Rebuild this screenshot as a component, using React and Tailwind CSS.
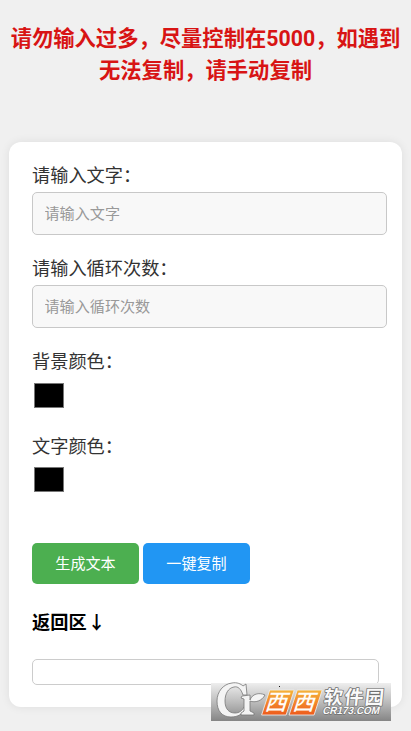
const cjk = "font-['Noto_Sans_CJK_SC',sans-serif]";

function Field({ label, placeholder }) {
  return (
    <div className="h-[93.2px]">
      <label className="block h-[27px] text-[18.2px] leading-[27px] text-[#333]">{label}</label>
      <input
        className="mt-[4px] block h-[43px] w-[355px] rounded-[5px] border border-[#c8c8c8] bg-[#f8f8f8] pl-[11.5px] pb-[4px] text-[15.1px] placeholder:text-[#999] placeholder:opacity-100"
        placeholder={placeholder}
      />
    </div>
  );
}

function ColorField({ label }) {
  return (
    <div className="h-[84.6px]">
      <div className="h-[27px] text-[18.2px] leading-[27px] text-[#333]">{label}</div>
      <div className="mt-[8.4px] ml-[2px] h-[25px] w-[30px] border border-[#777] bg-black" />
    </div>
  );
}

function Watermark() {
  return (
    <svg className="absolute left-[211px] top-[683px]" width="180" height="38" viewBox="0 0 180 38" overflow="visible">
      <defs>
        <linearGradient id="plate" x1="0" y1="0" x2="0" y2="1">
          <stop offset="0" stopColor="#eeeeee" />
          <stop offset="0.5" stopColor="#bcbcbc" />
          <stop offset="1" stopColor="#858585" />
        </linearGradient>
        <linearGradient id="orange" x1="0" y1="0" x2="0" y2="1">
          <stop offset="0" stopColor="#f6b43a" />
          <stop offset="1" stopColor="#ee5a1c" />
        </linearGradient>
      </defs>
      <rect width="180" height="38" fill="url(#plate)" />
      <g fill="#f4f4f4" stroke="#777" strokeWidth="0.8" strokeLinejoin="round">
        <path d="M35 1 L36 12 L32 12 C30 6 27 3 23 4 C17 5 14 11 14 18 C14 26 18 30 24 30 C28 30 31 28 33 24 L35 25 C32 31 27 34 20 34 C11 34 6 28 6 18 C6 9 12 1 21 0 C26 -1 30 1 32 3 Z" />
        <path d="M31 13 L39 12 L39 17 C41 11 48 9 54 12 C51 18 44 20 39 18 L39 28 L43 30 L43 32 L30 32 L30 30 L33 28 L33 16 L30 15 Z" />
      </g>
      <g transform="skewX(-18)">
        <rect x="61" y="7" width="24.5" height="25" fill="url(#orange)" stroke="#eee" strokeWidth="0.8" />
        <rect x="88.5" y="7" width="25" height="25" fill="url(#orange)" stroke="#eee" strokeWidth="0.8" />
        <g className={cjk} fill="#fffdf8" fontSize="22" fontWeight="500">
          <text x="62.2" y="27.5">西</text>
          <text x="90" y="27.5">西</text>
        </g>
      </g>
      <g transform="skewX(-6)" fill="#fafafa" stroke="#707070" strokeWidth="1.5" paintOrder="stroke" strokeLinejoin="round">
        <text className={cjk} x="114.5" y="21" fontSize="19" fontWeight="700" textLength="60">软件园</text>
      </g>
      <g transform="skewX(-14)" fill="#fafafa" stroke="#707070" strokeWidth="1.3" paintOrder="stroke" strokeLinejoin="round">
        <text className="font-['Liberation_Sans',sans-serif]" x="119" y="31.5" fontSize="10.5" fontWeight="700" textLength="57" lengthAdjust="spacingAndGlyphs">CR173.COM</text>
      </g>
      <rect x="68" y="3" width="1" height="1" fill="#111" />
    </svg>
  );
}

export default function App() {
  return (
    <div className="relative h-[731px] w-[411px] overflow-hidden bg-[#f0f0f0] px-[9px] pt-[21px] font-['Noto_Sans_CJK_SC',sans-serif]">
      <h1 className="h-[121px] whitespace-nowrap text-center text-[21.3px] font-bold leading-8 text-[#d81414]">
        <span className="block h-[31.5px]">
          请勿输入过多，尽量控制在<span className="font-['Roboto',sans-serif]">5000</span>，如遇到
        </span>
        <span className="block">无法复制，请手动复制</span>
      </h1>
      <main className="h-[565px] w-[393px] rounded-[12px] bg-white pl-[23px] pt-[19px] shadow-[0_0_10px_rgba(0,0,0,0.08)]">
        <Field label="请输入文字：" placeholder="请输入文字" />
        <Field label="请输入循环次数：" placeholder="请输入循环次数" />
        <ColorField label="背景颜色：" />
        <ColorField label="文字颜色：" />
        <div className="mt-[26.4px] flex gap-1">
          <button className="h-[41px] w-[107px] rounded-[5px] bg-[#4caf50] pb-[3px] text-[15.1px] text-white">生成文本</button>
          <button className="h-[41px] w-[107px] rounded-[5px] bg-[#2196f3] pb-[3px] text-[15.1px] text-white">一键复制</button>
        </div>
        <h2 className="mt-[24px] h-[27px] text-[18.2px] font-bold leading-[27px] text-black">返回区<span className="ml-[1px]">↓</span></h2>
        <div className="mt-[24px] h-[26px] w-[347px] rounded-[5px] border border-[#ccc] bg-white" />
      </main>
      <Watermark />
    </div>
  );
}
